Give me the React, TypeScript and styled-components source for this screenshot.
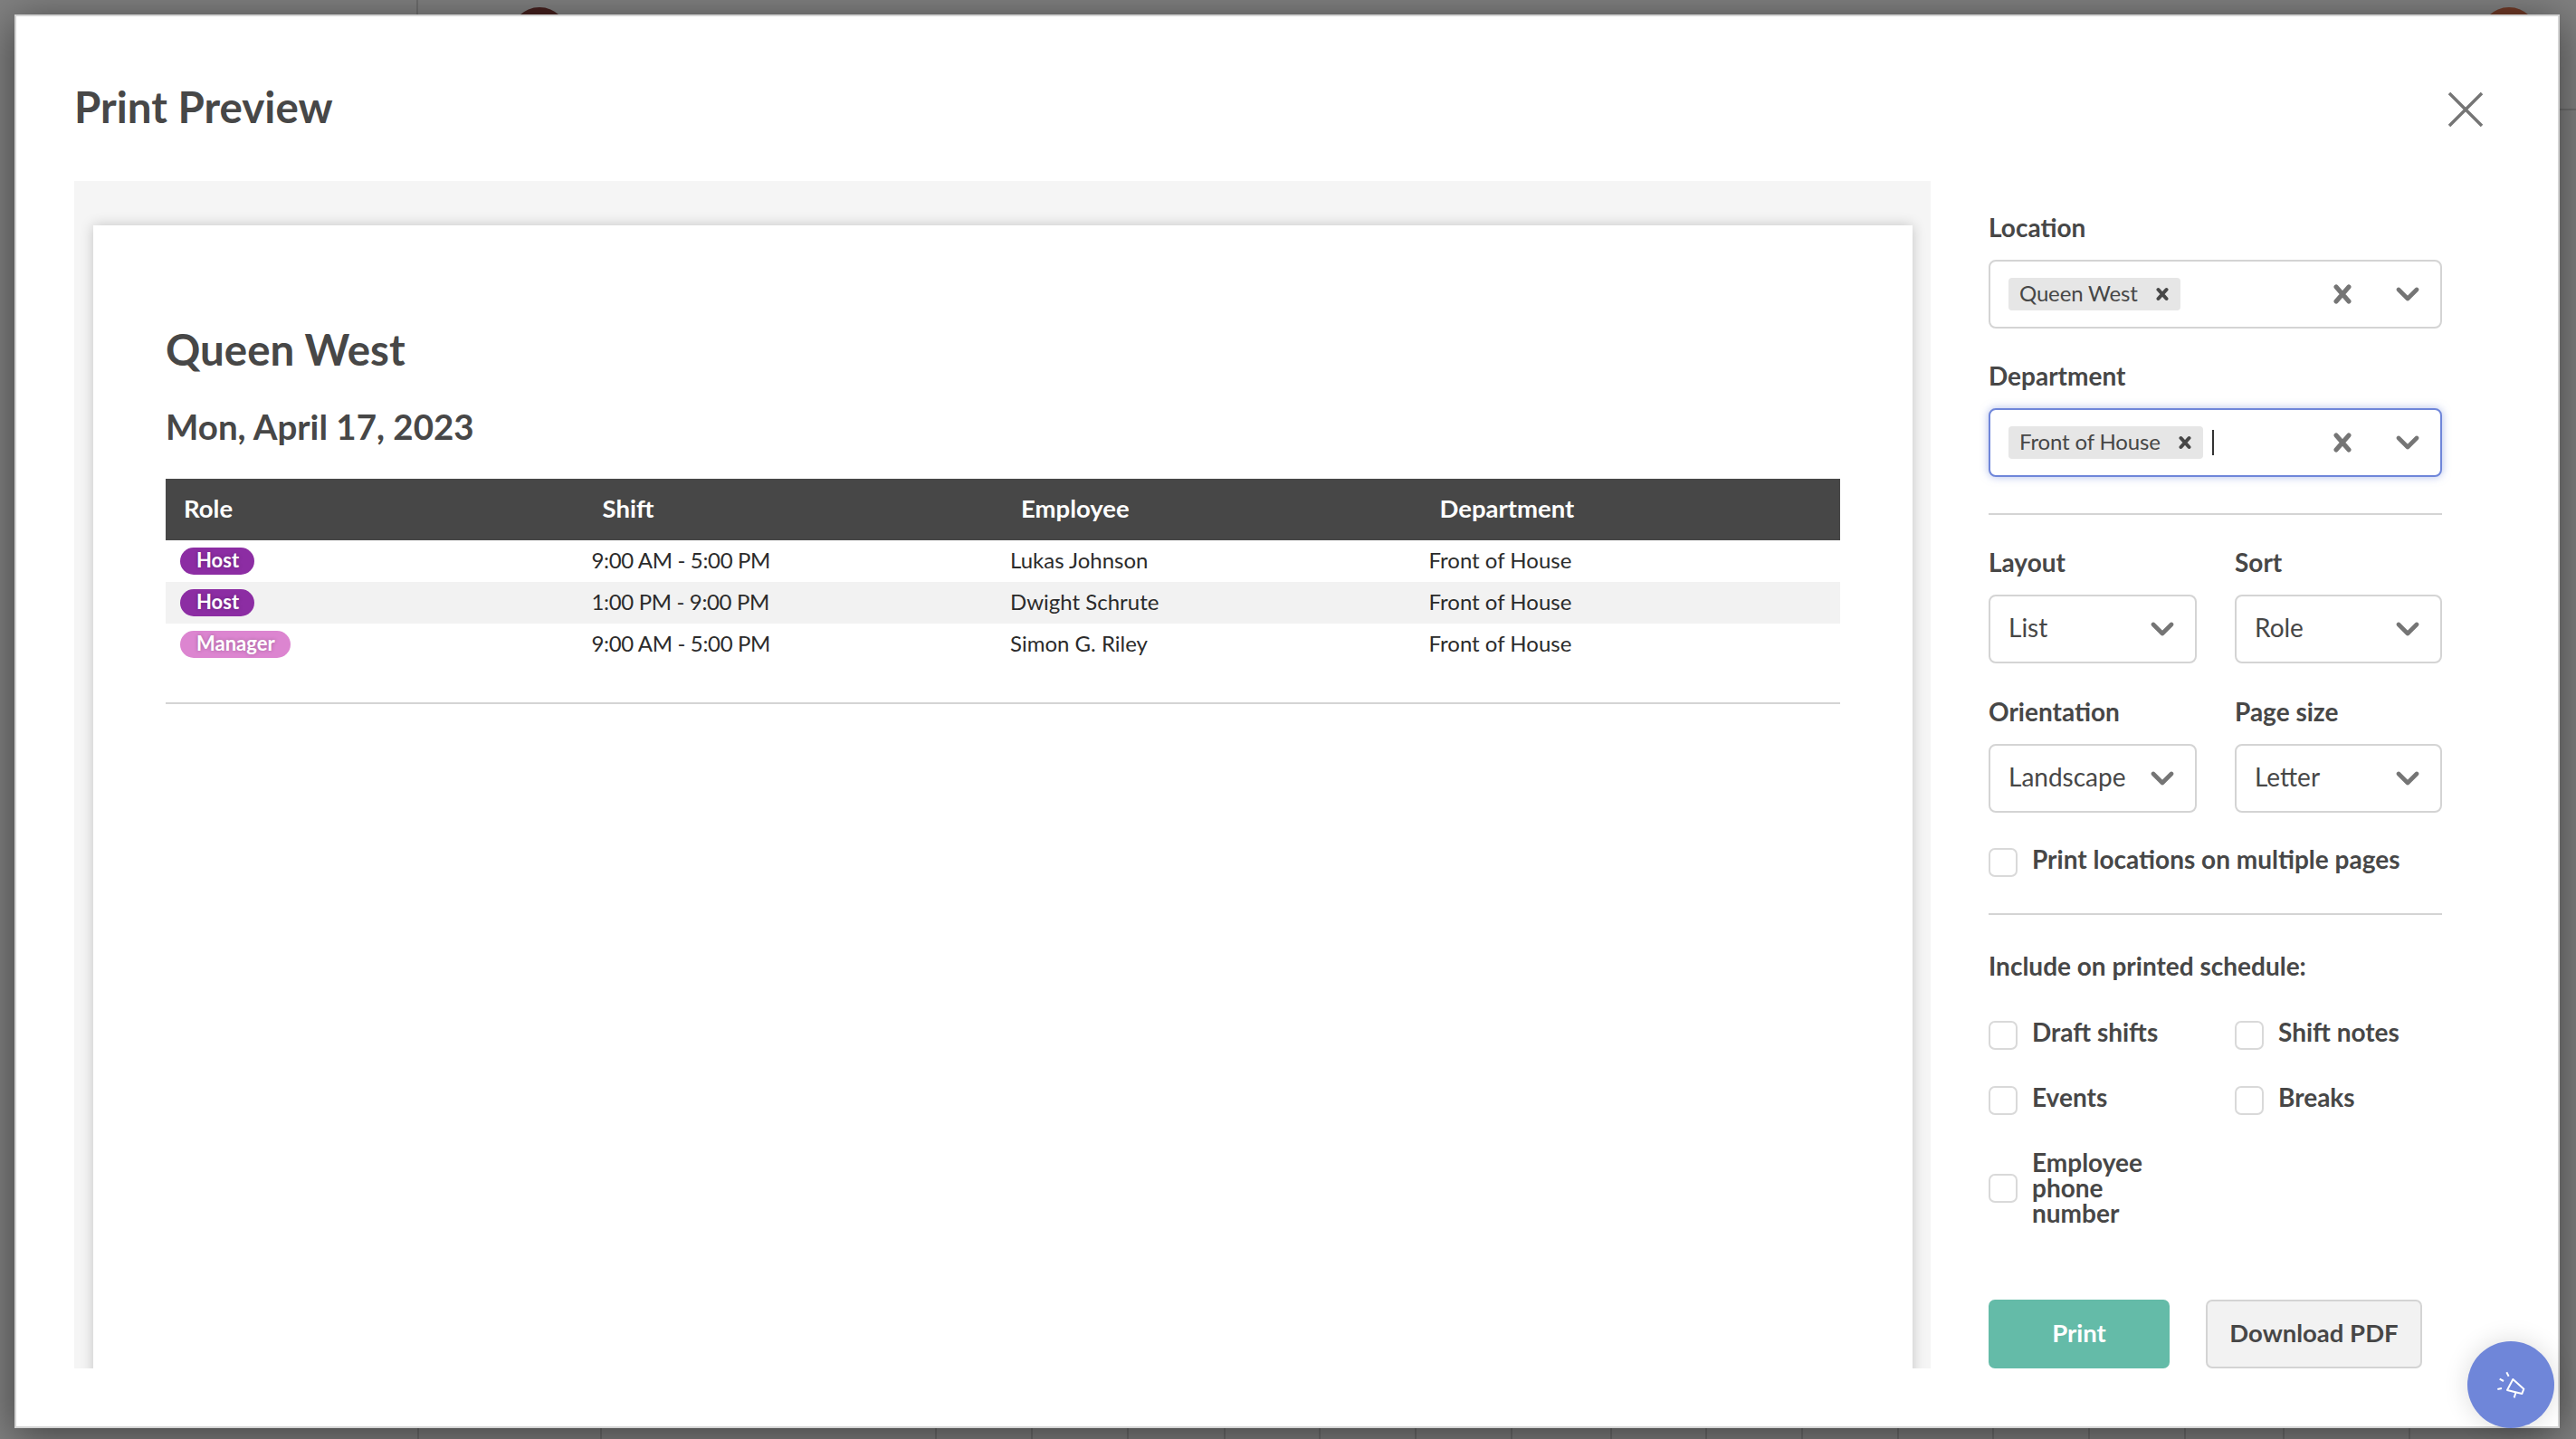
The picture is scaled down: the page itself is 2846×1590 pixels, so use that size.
import React from 'react'
import styled, { createGlobalStyle } from 'styled-components'

const GlobalStyle = createGlobalStyle`
  html, body {
    margin: 0;
    padding: 0;
    background: #808080;
  }
  * {
    box-sizing: border-box;
  }
  body {
    font-family: Lato, "Open Sans", "Liberation Sans", sans-serif;
    color: #474747;
  }
`

const Screen = styled.div`
  position: relative;
  width: 2846px;
  height: 1590px;
  overflow: hidden;
  background: #808080;
  padding: 16px 18px 12px 16px;
`

const GridTick = styled.div<{ $x: number }>`
  position: absolute;
  bottom: 0;
  height: 20px;
  left: ${(p) => p.$x}px;
  width: 2px;
  background: rgba(0, 0, 0, 0.14);
`

const TopTick = styled.div`
  position: absolute;
  top: 0;
  left: 460px;
  width: 2px;
  height: 20px;
  background: rgba(0, 0, 0, 0.14);
`

const HeaderLine = styled.div`
  position: absolute;
  left: 2820px;
  right: 0;
  top: 120px;
  height: 2px;
  background: rgba(0, 0, 0, 0.14);
`

const Avatar = styled.div<{ $x: number; $color: string }>`
  position: absolute;
  top: 8px;
  left: ${(p) => p.$x}px;
  width: 64px;
  height: 64px;
  border-radius: 50%;
  background: ${(p) => p.$color};
`

const Modal = styled.div`
  position: relative;
  width: 2812px;
  height: 1562px;
  background: #fff;
  border: 2px solid #d4d4d4;
  box-shadow: 0 8px 44px rgba(0, 0, 0, 0.5);
  display: flex;
  flex-direction: column;
`

const ModalHeader = styled.header`
  height: 182px;
  flex: none;
  display: flex;
  align-items: flex-start;
  justify-content: space-between;
  padding: 74px 82px 0 64px;
`

const ModalTitle = styled.h1`
  margin: 0;
  font-size: 47.5px;
  line-height: 52px;
  font-weight: 700;
  color: #474747;
`

const CloseIcon = styled.svg`
  width: 40px;
  height: 40px;
  margin-top: 9px;
  stroke: #757575;
  stroke-width: 3.5;
  fill: none;
`

const ModalBody = styled.div`
  flex: none;
  height: 1312px;
  display: flex;
  padding-left: 64px;
`

const PreviewPane = styled.section`
  flex: none;
  width: 2051px;
  height: 1312px;
  background: #f5f5f5;
  padding: 49px 20px 0 21px;
  overflow: hidden;
`

const Page = styled.article`
  background: #fff;
  height: 1500px;
  box-shadow: 0 0 14px rgba(0, 0, 0, 0.2);
  padding: 109px 80px 0;
`

const PageTitle = styled.h2`
  margin: 0;
  font-size: 47.5px;
  line-height: 56px;
  font-weight: 700;
`

const PageDate = styled.h3`
  margin: 32px 0 33px;
  font-size: 38.5px;
  line-height: 50px;
  font-weight: 700;
`

const TableHead = styled.div`
  display: grid;
  grid-template-columns: repeat(4, 1fr);
  align-items: center;
  height: 68px;
  background: #474747;
  color: #fff;
  font-size: 27.5px;
  font-weight: 700;
`

const HeadCell = styled.div`
  padding: 0 0 3px 20px;
`

const TableRow = styled.div<{ $striped?: boolean }>`
  display: grid;
  grid-template-columns: repeat(4, 1fr);
  align-items: center;
  height: 46px;
  background: ${(p) => (p.$striped ? '#f2f2f2' : '#fff')};
  font-size: 24px;
  color: #2b2b2b;
`

const Cell = styled.div`
  padding: 0 0 3px 8px;
`

const ShiftCell = styled(Cell)`
  letter-spacing: -0.35px;
`

const RoleCell = styled.div`
  padding-left: 8px;
  display: flex;
`

const RolePill = styled.span<{ $color: string }>`
  display: inline-block;
  height: 30px;
  margin-left: 8px;
  padding: 0 17px 0 18px;
  border-radius: 15px;
  background: ${(p) => p.$color};
  color: #fff;
  font-size: 22px;
  line-height: 27px;
  font-weight: 700;
  text-shadow: 0 0 4px rgba(0, 0, 0, 0.25);
`

const PageRule = styled.hr`
  margin: 41px 0 0;
  border: 0;
  height: 2px;
  background: #d4d4d4;
`

const SidePanel = styled.aside`
  flex: none;
  width: 501px;
  margin-left: 64px;
  padding-top: 35px;
  display: flex;
  flex-direction: column;
`

const FieldLabel = styled.label`
  display: block;
  height: 34px;
  font-size: 28px;
  line-height: 32px;
  font-weight: 700;
  color: #474747;
`

const Field = styled.div<{ $top?: number }>`
  margin-top: ${(p) => p.$top ?? 0}px;
`

const SelectBox = styled.div<{ $focused?: boolean }>`
  display: flex;
  align-items: center;
  height: 76px;
  margin-top: 18px;
  padding: 0 23px 0 20px;
  background: #fff;
  border: 2px solid ${(p) => (p.$focused ? '#6f86d9' : '#d4d4d4')};
  border-radius: 8px;
  box-shadow: ${(p) => (p.$focused ? '0 0 10px rgba(111, 134, 217, 0.55)' : 'none')};
  font-size: 28px;
  color: #474747;
`

const SelectValue = styled.span`
  flex: 1;
  white-space: nowrap;
  padding-bottom: 4px;
`

const Chip = styled.span`
  display: inline-flex;
  align-items: center;
  height: 36px;
  padding: 0 13px 0 12px;
  gap: 20px;
  border-radius: 4px;
  background: #e6e6e6;
  color: #474747;
  font-size: 24px;
  letter-spacing: -0.15px;
`

const ChipText = styled.span`
  margin-top: -3px;
`

const ChipValues = styled.div`
  flex: 1;
  display: flex;
  align-items: center;
`

const Caret = styled.span`
  width: 2px;
  height: 28px;
  margin-left: 10px;
  background: #333;
`

const ChipClose = styled.svg`
  width: 14px;
  height: 16px;
  stroke: #474747;
  stroke-width: 4;
  stroke-linecap: round;
  fill: none;
`

const ClearIcon = styled.svg`
  flex: none;
  width: 20px;
  height: 22px;
  margin-right: 49px;
  stroke: #757575;
  stroke-width: 5;
  stroke-linecap: round;
  fill: none;
`

const ChevronIcon = styled.svg`
  flex: none;
  width: 26px;
  height: 16px;
  stroke: #757575;
  stroke-width: 4.6;
  stroke-linecap: round;
  stroke-linejoin: round;
  fill: none;
`

const Divider = styled.hr`
  margin: 40px 0 0;
  border: 0;
  height: 2px;
  background: #d4d4d4;
`

const TwoColumns = styled.div<{ $top: number }>`
  display: grid;
  grid-template-columns: 230px 229px;
  column-gap: 42px;
  margin-top: ${(p) => p.$top}px;
`

const CheckRow = styled.div<{ $top: number; $centered?: boolean }>`
  display: flex;
  align-items: ${(p) => (p.$centered ? 'center' : 'flex-start')};
  gap: 16px;
  margin-top: ${(p) => p.$top}px;
`

const CheckBox = styled.span`
  flex: none;
  width: 32px;
  height: 32px;
  background: #fff;
  border: 2px solid #d9d9d9;
  border-radius: 7px;
`

const CheckText = styled.span`
  font-size: 28px;
  line-height: 28px;
  font-weight: 700;
  color: #474747;
  margin-top: -2px;
`

const ButtonRow = styled.div`
  display: flex;
  gap: 40px;
  margin-top: 82px;
`

const PrintButton = styled.button`
  width: 200px;
  height: 76px;
  padding: 0 0 3px;
  border: 0;
  border-radius: 7px;
  background: #64bba8;
  color: #fff;
  font: 700 27.5px Lato, "Open Sans", sans-serif;
`

const DownloadButton = styled.button`
  width: 239px;
  height: 76px;
  padding: 0 0 3px;
  border: 2px solid #d4d4d4;
  border-radius: 7px;
  background: #f2f2f2;
  color: #474747;
  font: 700 27.5px Lato, "Open Sans", sans-serif;
`

const AnnounceFab = styled.button`
  position: absolute;
  right: 4px;
  bottom: -2px;
  width: 96px;
  height: 96px;
  padding: 0;
  border: 0;
  border-radius: 50%;
  background: #6f86d9;
  box-shadow: 0 0 28px rgba(0, 0, 0, 0.14);
  display: flex;
  align-items: center;
  justify-content: center;
`

const Megaphone = styled.svg`
  width: 35px;
  height: 35px;
  stroke: #fff;
  stroke-width: 6;
  stroke-linejoin: round;
  fill: none;
`

const Chevron = () => (
  <ChevronIcon viewBox="0 0 26 16">
    <path d="M3 3 L13 13 L23 3" />
  </ChevronIcon>
)

const Clear = () => (
  <ClearIcon viewBox="0 0 20 22">
    <path d="M3 3 L17 19 M17 3 L3 19" />
  </ClearIcon>
)

const ChipX = () => (
  <ChipClose viewBox="0 0 14 16">
    <path d="M2.5 3 L11.5 13 M11.5 3 L2.5 13" />
  </ChipClose>
)

const rows = [
  { role: 'Host', color: '#8c2da3', shift: '9:00 AM - 5:00 PM', employee: 'Lukas Johnson' },
  { role: 'Host', color: '#8c2da3', shift: '1:00 PM - 9:00 PM', employee: 'Dwight Schrute' },
  { role: 'Manager', color: '#dc85d0', shift: '9:00 AM - 5:00 PM', employee: 'Simon G. Riley' },
]

const ticks = [
  461, 663, 1033, 1139, 1245, 1352, 1457, 1563, 1669, 1779, 1884, 1990, 2096, 2201, 2307, 2413, 2522, 2661,
]

export default function App() {
  return (
    <Screen>
      <GlobalStyle />
      {ticks.map((x) => (
        <GridTick key={x} $x={x} />
      ))}
      <TopTick />
      <HeaderLine />
      <Avatar $x={564} $color="#45201e" />
      <Avatar $x={2740} $color="#703a27" />

      <Modal>
        <ModalHeader>
          <ModalTitle>Print Preview</ModalTitle>
          <CloseIcon viewBox="0 0 40 40">
            <path d="M2 2 L38 38 M38 2 L2 38" />
          </CloseIcon>
        </ModalHeader>

        <ModalBody>
          <PreviewPane>
            <Page>
              <PageTitle>Queen West</PageTitle>
              <PageDate>Mon, April 17, 2023</PageDate>
              <TableHead>
                <HeadCell>Role</HeadCell>
                <HeadCell>Shift</HeadCell>
                <HeadCell>Employee</HeadCell>
                <HeadCell>Department</HeadCell>
              </TableHead>
              {rows.map((row, i) => (
                <TableRow key={row.employee} $striped={i === 1}>
                  <RoleCell>
                    <RolePill $color={row.color}>{row.role}</RolePill>
                  </RoleCell>
                  <ShiftCell>{row.shift}</ShiftCell>
                  <Cell>{row.employee}</Cell>
                  <Cell>Front of House</Cell>
                </TableRow>
              ))}
              <PageRule />
            </Page>
          </PreviewPane>

          <SidePanel>
            <Field>
              <FieldLabel>Location</FieldLabel>
              <SelectBox>
                <ChipValues>
                  <Chip>
                    <ChipText>Queen West</ChipText>
                    <ChipX />
                  </Chip>
                </ChipValues>
                <Clear />
                <Chevron />
              </SelectBox>
            </Field>
            <Field $top={36}>
              <FieldLabel>Department</FieldLabel>
              <SelectBox $focused>
                <ChipValues>
                  <Chip>
                    <ChipText>Front of House</ChipText>
                    <ChipX />
                  </Chip>
                  <Caret />
                </ChipValues>
                <Clear />
                <Chevron />
              </SelectBox>
            </Field>

            <Divider />

            <TwoColumns $top={36}>
              <Field>
                <FieldLabel>Layout</FieldLabel>
                <SelectBox>
                  <SelectValue>List</SelectValue>
                  <Chevron />
                </SelectBox>
              </Field>
              <Field>
                <FieldLabel>Sort</FieldLabel>
                <SelectBox>
                  <SelectValue>Role</SelectValue>
                  <Chevron />
                </SelectBox>
              </Field>
            </TwoColumns>
            <TwoColumns $top={37}>
              <Field>
                <FieldLabel>Orientation</FieldLabel>
                <SelectBox>
                  <SelectValue>Landscape</SelectValue>
                  <Chevron />
                </SelectBox>
              </Field>
              <Field>
                <FieldLabel>Page size</FieldLabel>
                <SelectBox>
                  <SelectValue>Letter</SelectValue>
                  <Chevron />
                </SelectBox>
              </Field>
            </TwoColumns>

            <CheckRow $top={39}>
              <CheckBox />
              <CheckText>Print locations on multiple pages</CheckText>
            </CheckRow>

            <Divider />

            <Field $top={40}>
              <FieldLabel>Include on printed schedule:</FieldLabel>
            </Field>

            <TwoColumns $top={43}>
              <CheckRow $top={0}>
                <CheckBox />
                <CheckText>Draft shifts</CheckText>
              </CheckRow>
              <CheckRow $top={0}>
                <CheckBox />
                <CheckText>Shift notes</CheckText>
              </CheckRow>
            </TwoColumns>
            <TwoColumns $top={40}>
              <CheckRow $top={0}>
                <CheckBox />
                <CheckText>Events</CheckText>
              </CheckRow>
              <CheckRow $top={0}>
                <CheckBox />
                <CheckText>Breaks</CheckText>
              </CheckRow>
            </TwoColumns>
            <CheckRow $top={40} $centered>
              <CheckBox />
              <CheckText>
                Employee
                <br />
                phone
                <br />
                number
              </CheckText>
            </CheckRow>

            <ButtonRow>
              <PrintButton>Print</PrintButton>
              <DownloadButton>Download PDF</DownloadButton>
            </ButtonRow>
          </SidePanel>
        </ModalBody>

        <AnnounceFab aria-label="Announcements">
          <Megaphone viewBox="170 215 105 105">
            <path d="M207 225 L214 238 M184 247 L197 254 M177 281 L191 278" />
            <path d="M228 248 L264 280 L258 296 L209 284 Z" />
            <path d="M238 290 L232 309" />
          </Megaphone>
        </AnnounceFab>
      </Modal>
    </Screen>
  )
}
